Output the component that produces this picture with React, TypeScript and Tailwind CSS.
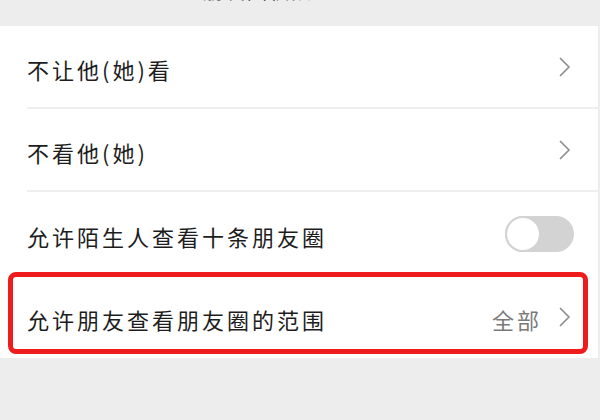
import React from "react";

function Chevron() {
  return (
    <svg width="12" height="20" viewBox="0 0 12 20" fill="none" className="shrink-0">
      <path d="M1.5 1.5 L10 10 L1.5 18.5" stroke="#8e8e8e" strokeWidth="1.7" strokeLinecap="round" strokeLinejoin="round" />
    </svg>
  );
}

function Toggle() {
  return (
    <div className="w-[69px] h-[36px] rounded-full bg-[#d3d3d3] flex items-center">
      <div className="w-[36px] h-[36px] rounded-full bg-white border-2 border-[#d3d3d3]" />
    </div>
  );
}

function Row({ label, children, last }: { label: string; children?: React.ReactNode; last?: boolean }) {
  return (
    <div className="pl-[27px]">
      <div className={"h-[83px] flex items-center pr-[27px] " + (last ? "" : "border-b-2 border-[#efefef]")}>
        <span className="flex-1 pt-[5px] text-[22px] tracking-[3px] text-[#1d1d1d]">{label}</span>
        {children}
      </div>
    </div>
  );
}

export default function App() {
  return (
    <div
      className="w-[600px] h-[420px] bg-[#ededed] overflow-hidden"
      style={{ fontFamily: '"Noto Sans CJK SC", "Noto Sans", sans-serif' }}
    >
      {/* header, mostly scrolled off */}
      <div className="h-[26px] overflow-hidden relative">
        <div className="flex items-center h-[30px] -mt-[24px] px-[24px]">
          <span className="text-[20px] text-[#222]">‹</span>
          <span className="flex-1 text-center text-[20px] text-[#222] tracking-[2px] pr-[90px]">朋友圈权限</span>
        </div>
      </div>

      <div className="bg-white mr-[2px]">
        <Row label="不让他(她)看">
          <Chevron />
        </Row>
        <Row label="不看他(她)">
          <Chevron />
        </Row>
        <div className="pl-[27px]">
          <div className="h-[83px] flex items-center pr-[24px]">
            <span className="flex-1 pt-[5px] text-[22px] tracking-[3px] text-[#1d1d1d]">允许陌生人查看十条朋友圈</span>
            <Toggle />
          </div>
        </div>
        <div className="relative">
          <Row label="允许朋友查看朋友圈的范围" last>
            <span className="pt-[5px] mr-[17px] text-[22px] tracking-[3px] text-[#7a7a7a]">全部</span>
            <Chevron />
          </Row>
          {/* red highlight annotation */}
          <div className="absolute left-[8px] right-[10px] top-[-3px] bottom-[4px] border-[5px] border-[#ee1c1c] rounded-[8px]" />
        </div>
      </div>
    </div>
  );
}
